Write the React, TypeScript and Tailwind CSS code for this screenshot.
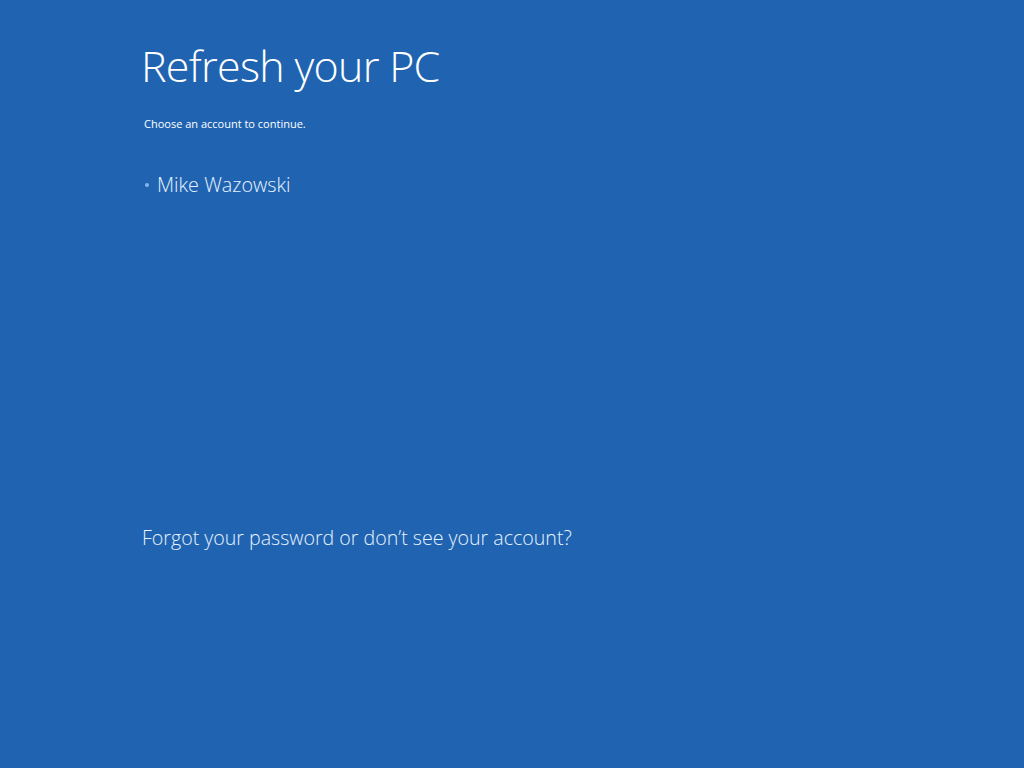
export default function App() {
  return (
    <div
      className="w-[1024px] h-[768px] bg-[#2064b1] text-white overflow-hidden"
      style={{ fontFamily: '"Open Sans", "Noto Sans", sans-serif' }}
    >
      <div className="flex flex-col pl-[141px] pt-[39px] h-full">
        <h1 className="text-[43px] font-light leading-[54px] tracking-[-0.7px]">Refresh your PC</h1>
        <p className="mt-[23px] ml-[3px] text-[11px] leading-[16px]">Choose an account to continue.</p>
        <div className="mt-[40px] ml-[4px] flex items-center gap-[8px] text-[#e6f2ff]">
          <span className="w-[4px] h-[4px] rounded-full bg-[#7fb6ee]" />
          <span className="text-[19.8px] font-light leading-[26px]">Mike Wazowski</span>
        </div>
        <p className="mt-[326px] ml-[1px] text-[19.6px] font-light leading-[28px] text-[#e6f2ff]">
          Forgot your password or don’t see your account?
        </p>
      </div>
    </div>
  )
}
